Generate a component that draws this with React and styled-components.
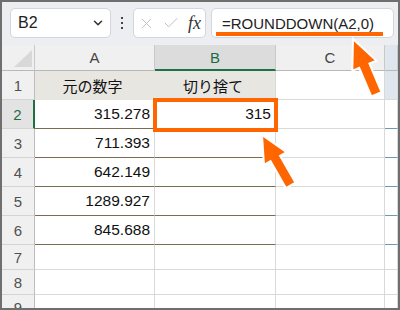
import React from 'react';
import styled, {createGlobalStyle} from 'styled-components';
import {ChevronDown, X, Check} from 'lucide-react';

const GlobalStyle = createGlobalStyle`
	html, body {
		margin: 0;
		padding: 0;
		background: #fff;
	}
	body {
		font-family: "Liberation Sans", "Noto Sans CJK JP", sans-serif;
	}
`;

const Frame = styled.div`
	position: relative;
	width: 400px;
	height: 310px;
	box-sizing: border-box;
	border: 2px solid #6f6f6f;
	overflow: hidden;
	background: #fff;
	display: flex;
	flex-direction: column;
`;

//Formula bar
const FormulaBar = styled.div`
	height: 43px;
	flex: none;
	background: #eceef1;
	display: flex;
	align-items: flex-start;
	padding: 6px 0 0 8px;
	box-sizing: border-box;
`;

const Box = styled.div`
	height: 30px;
	box-sizing: border-box;
	background: #fff;
	border: 1px solid #d3d6da;
	border-radius: 5px;
	display: flex;
	align-items: center;
`;

const NameBox = styled(Box)`
	width: 101px;
	padding: 0 5px 0 7px;
	justify-content: space-between;
	font-size: 16px;
	color: #222;
`;

const Dots = styled.div`
	width: 22px;
	height: 30px;
	display: flex;
	flex-direction: column;
	align-items: center;
	justify-content: center;
	gap: 3px;
	span {
		width: 2px;
		height: 2px;
		background: #444;
	}
`;

const FxBox = styled(Box)`
	width: 73px;
	padding: 0 0 0 4px;
	gap: 7px;
	color: #bdbdbd;
`;

const Fx = styled.span`
	font-family: "Liberation Serif", serif;
	font-style: italic;
	font-size: 18px;
	color: #333;
	margin-left: 1px;
`;

const InputBox = styled(Box)`
	margin-left: 5px;
	width: 183px;
	position: relative;
	padding-left: 10px;
	font-size: 15px;
	color: #222;
`;

const Underline = styled.div`
	position: absolute;
	left: 4px;
	top: 23px;
	width: 167px;
	height: 4px;
	background: #ff6600;
`;

//Sheet grid
const Sheet = styled.div`
	display: flex;
	flex-direction: column;
`;

const Row = styled.div`
	display: flex;
	height: ${p => p.h}px;
	flex: none;
`;

const Cell = styled.div`
	position: relative;
	box-sizing: border-box;
	width: ${p => p.w ? p.w + 'px' : 'auto'};
	flex: ${p => p.w ? 'none' : '1'};
	height: 100%;
	display: flex;
	align-items: center;
	justify-content: ${p => p.align || 'flex-end'};
	padding-right: 4px;
	border-right: 1px solid ${p => p.rc || '#d9d9d9'};
	border-bottom: 1px solid ${p => p.bc || '#d9d9d9'};
	background: ${p => p.bg || '#fff'};
	font-size: ${p => p.jp ? '15px' : '15.5px'};
	font-family: ${p => p.jp ? '"Noto Sans CJK JP", sans-serif' : '"Liberation Sans", sans-serif'};
	color: #111;
`;

const HeadCell = styled.div`
	position: relative;
	box-sizing: border-box;
	width: ${p => p.w ? p.w + 'px' : 'auto'};
	flex: ${p => p.w ? 'none' : '1'};
	height: 100%;
	display: flex;
	align-items: center;
	justify-content: center;
	font-size: 15px;
	color: ${p => p.active ? '#1d6b45' : '#444'};
	background: ${p => p.active ? '#dcdcdc' : (p.bg || '#f0f0f0')};
	border-right: 1px solid #c9c9c9;
	border-bottom: ${p => p.active ? '2px solid #1e7145' : '1px solid #b8b8b8'};
`;

const RowHead = styled.div`
	box-sizing: border-box;
	width: 33px;
	flex: none;
	height: 100%;
	display: flex;
	align-items: center;
	justify-content: center;
	font-size: 15px;
	color: ${p => p.active ? '#1d6b45' : '#505050'};
	background: ${p => p.active ? '#e3e3e3' : '#f0f0f0'};
	border-right: ${p => p.active ? '2px solid #1e7145' : '1px solid #bdbdbd'};
	border-bottom: 1px solid #d4d4d4;
`;

const Corner = styled.div`
	position: absolute;
	right: 2px;
	bottom: 3px;
	width: 0;
	height: 0;
	border-left: 18px solid transparent;
	border-bottom: 17px solid #d8d8d8;
`;

const Highlight = styled.div`
	position: absolute;
	z-index: 2;
	left: -2px;
	top: -2px;
	width: 125px;
	height: 34px;
	box-sizing: border-box;
	border: 4px solid #ff6600;
	pointer-events: none;
`;

const Arrows = styled.svg`
	position: absolute;
	z-index: 3;
	left: -2px;
	top: -2px;
	width: 400px;
	height: 310px;
	pointer-events: none;
`;

const COLS = [120, 121, 109];
const BROWN = '#7a6c50';
const BLUE = '#6e9ab9';

const data = [
	{a: '315.278', b: '315'},
	{a: '711.393'},
	{a: '642.149'},
	{a: '1289.927'},
	{a: '845.688'}
];

const App = () => {
	return (
		<Frame>
			<GlobalStyle />
			<FormulaBar>
				<NameBox>
					<span>B2</span>
					<ChevronDown size={14} strokeWidth={2.6} color="#333" />
				</NameBox>
				<Dots><span /><span /><span /></Dots>
				<FxBox>
					<X size={17} strokeWidth={1.3} />
					<Check size={18} strokeWidth={1.3} />
					<Fx>fx</Fx>
				</FxBox>
				<InputBox>
					=ROUNDDOWN(A2,0)
					<Underline />
				</InputBox>
			</FormulaBar>
			<Sheet>
				<Row h={26}>
					<HeadCell w={33} bg="#f0f0f0"><Corner /></HeadCell>
					<HeadCell w={COLS[0]}>A</HeadCell>
					<HeadCell w={COLS[1]} active>B</HeadCell>
					<HeadCell w={COLS[2]}>C</HeadCell>
					<HeadCell bg="#dfe6ed" />
				</Row>
				<Row h={29}>
					<RowHead>1</RowHead>
					<Cell w={COLS[0]} jp align="center" bg="#e8e6e1" rc="#e8e6e1" bc="#e8e6e1">元の数字</Cell>
					<Cell w={COLS[1]} jp align="center" bg="#e8e6e1" bc="#e8e6e1">切り捨て</Cell>
					<Cell w={COLS[2]} />
					<Cell bg="#dfe6ed" />
				</Row>
				{data.map((item, index) => {
					return (
						<Row h={29} key={index}>
							<RowHead active={index === 0}>{index + 2}</RowHead>
							<Cell w={COLS[0]} bc={BROWN}>{item.a}</Cell>
							<Cell w={COLS[1]} bc={BROWN}>
								{item.b}
								{index === 0 && <Highlight />}
							</Cell>
							<Cell w={COLS[2]} />
							<Cell bc={BLUE} />
						</Row>
					);
				})}
				{[7, 8, 9].map((num) => {
					return (
						<Row h={25} key={num}>
							<RowHead>{num}</RowHead>
							<Cell w={COLS[0]} />
							<Cell w={COLS[1]} />
							<Cell w={COLS[2]} />
							<Cell />
						</Row>
					);
				})}
			</Sheet>
			<Arrows viewBox="0 0 400 310">
				<polygon
					points="262,135 264,164.9 270.5,161.2 285.9,188.1 295.5,182.7 280.1,155.8 286.6,152.1"
					fill="#ff6600" stroke="#fff" strokeWidth="2" strokeLinejoin="miter"
				/>
				<polygon
					points="353,39 352.3,70.8 359.2,67.8 371.3,96.4 381.5,92.2 369.4,63.6 376.3,60.6"
					fill="#ff6600" stroke="#fff" strokeWidth="2" strokeLinejoin="miter"
				/>
			</Arrows>
		</Frame>
	);
};

export default App;
